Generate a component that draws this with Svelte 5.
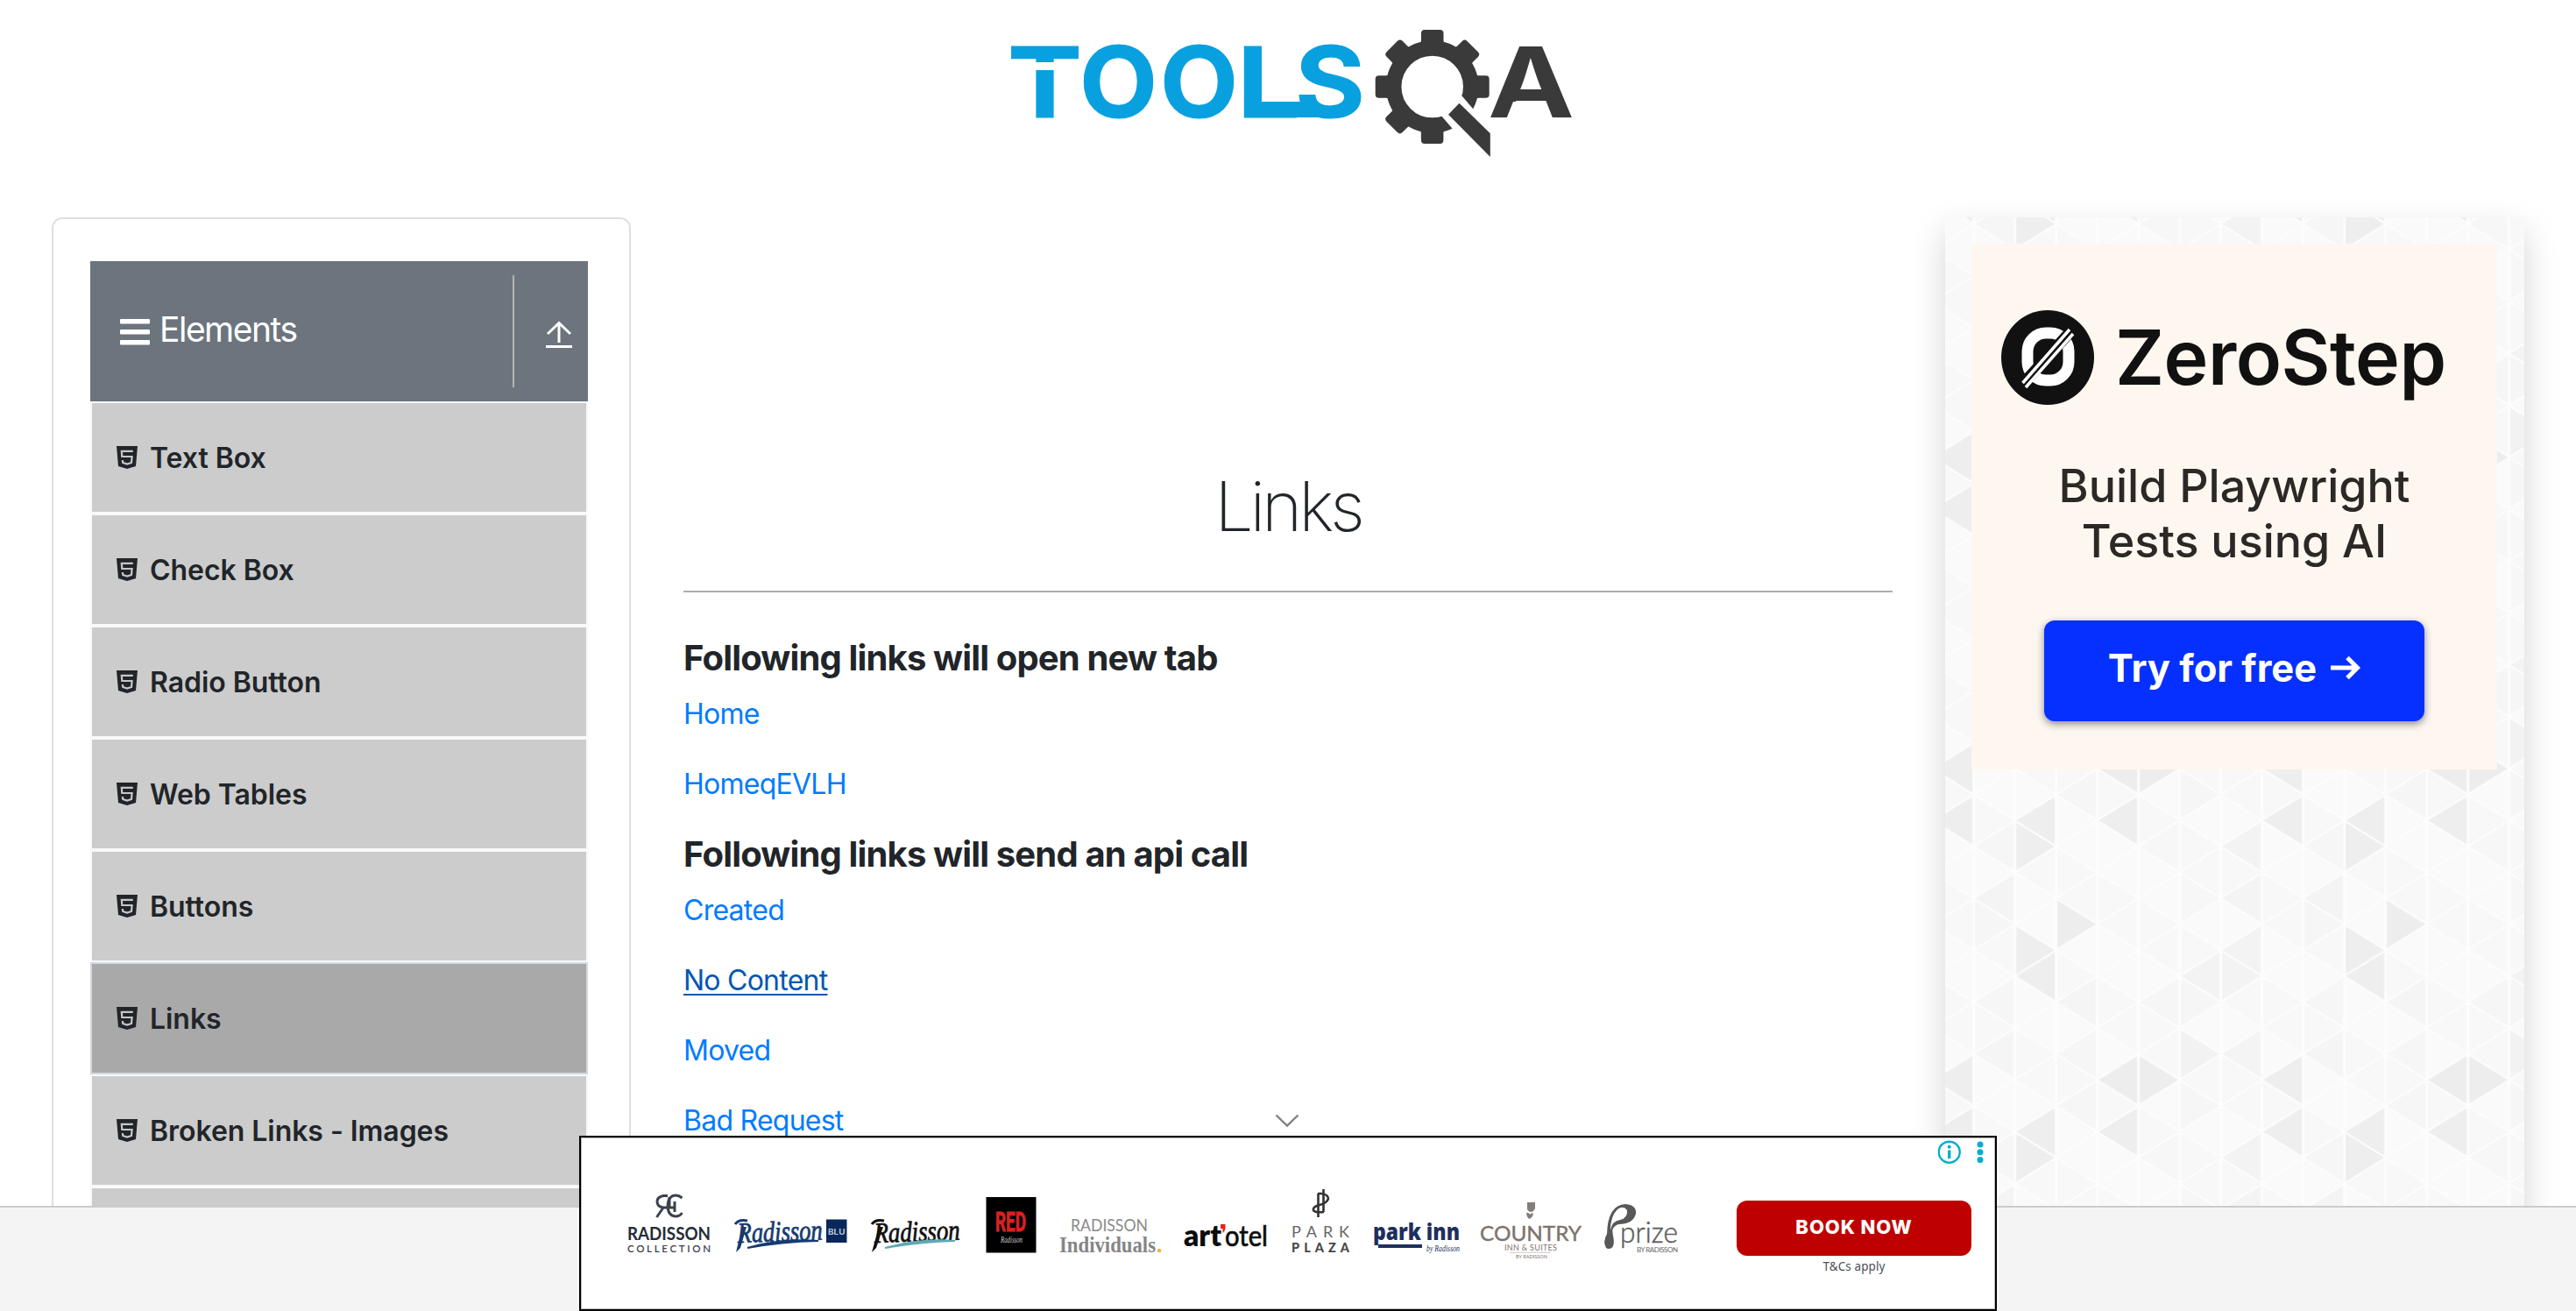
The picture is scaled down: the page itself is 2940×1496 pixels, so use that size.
<script>
  const menu = ['Text Box', 'Check Box', 'Radio Button', 'Web Tables', 'Buttons', 'Links', 'Broken Links - Images'];
  const active = 'Links';
  const tabLinks = ['Home', 'HomeqEVLH'];
  const apiLinks = ['Created', 'No Content', 'Moved', 'Bad Request'];
  const hovered = 'No Content';

  // Triangle backdrop: strips of width W, rows of half-height H, repeating every 8 x 12 cells.
  const W = 47;
  const H = 29.6;
  const shades = {
    '2,2': '#eeeeee', '4,2': '#eeeeee', '0,2': '#eeeeee', '2,3': '#eeeeee', '7,3': '#f3f3f3',
    '1,3': '#f6f6f6', '5,3': '#f7f7f7', '1,5': '#f4f4f4', '7,5': '#f4f4f4', '6,5': '#f7f7f7',
    '3,6': '#ededed', '1,6': '#f6f6f6', '2,7': '#eeeeee', '7,7': '#f3f3f3', '2,8': '#eeeeee',
    '6,8': '#f3f3f3', '7,8': '#f3f3f3', '3,9': '#f5f5f5', '5,9': '#f6f6f6', '6,9': '#f6f6f6',
    '1,9': '#f6f6f6', '6,11': '#f2f2f2', '7,11': '#f4f4f4', '1,11': '#f5f5f5', '3,11': '#f6f6f6',
    '4,0': '#ededed', '5,0': '#ededed', '0,0': '#eeeeee', '3,1': '#f6f6f6', '6,1': '#f6f6f6'
  };
  const triangles = [];
  for (let s = 0; s < 8; s++) {
    for (let k = -1; k <= 12; k++) {
      const row = (k + 12) % 12;
      const left = s * W + 1.5;
      const right = (s + 1) * W - 1.5;
      const y = k * H;
      const h = H - 2.5;
      const pts = (s + row) % 2 === 0
        ? `${left},${y} ${right},${y - h} ${right},${y + h}`
        : `${right},${y} ${left},${y - h} ${left},${y + h}`;
      const fill = shades[`${s},${row}`] ?? ((s * 5 + row * 3) % 4 < 2 ? '#fafafa' : '#f8f8f8');
      triangles.push({ pts, fill });
    }
  }
</script>

<div class="page">
  <header>
    <svg class="brand" viewBox="1140 20 670 170" width="670" height="170">
      <g class="word">
        <text x="1150" y="134" textLength="85" lengthAdjust="spacingAndGlyphs">T</text>
        <text x="1232" y="134" textLength="89" lengthAdjust="spacingAndGlyphs">O</text>
        <text x="1324" y="134" textLength="89" lengthAdjust="spacingAndGlyphs">O</text>
        <text x="1412" y="134" textLength="72" lengthAdjust="spacingAndGlyphs">L</text>
        <text x="1478" y="134" textLength="80" lengthAdjust="spacingAndGlyphs">S</text>
      </g>
      <rect x="1150" y="71" width="84" height="9" fill="#fff" />
      <rect x="1420" y="116" width="84" height="18" fill="#09a0df" />
      <circle cx="1634.700" cy="99" r="44" stroke-width="17.500" fill="none" stroke="#3a3a3a" />
      <g fill="#3a3a3a">
        {#each [0, 45, 90, 180, 225, 270, 315] as a}
          <path d="M1613 57 Q1622 53 1622 46 V38 Q1622 34 1626 34 H1643.500 Q1647.500 34 1647.500 38 V46 Q1647.500 53 1656.500 57Z" transform="rotate({a} 1634.7 99)" />
        {/each}
      </g>
      <path d="M1664 108 L1669 110 L1705 152 V190 H1695 L1644 131Z" fill="#fff" />
      <path d="M1665.500 117.700 L1700.800 152.300 V179 L1653 130.700Z" fill="#3a3a3a" />
      <text class="dark" x="1698" y="134" textLength="99" lengthAdjust="spacingAndGlyphs">A</text>
      <path d="M1719 136 L1727 116 H1732 L1730 136Z" fill="#fff" />
    </svg>
  </header>

  <main>
    <aside class="sidebar">
      <div class="group">
        <div class="title">
          <svg width="34" height="32" viewBox="0 0 34 32" fill="#fff">
            <rect y="1" width="34" height="5.500" rx="1" /><rect y="13" width="34" height="5.500" rx="1" /><rect y="25" width="34" height="5.500" rx="1" />
          </svg>
          <span>Elements</span>
        </div>
        <div class="toggle">
          <svg width="32" height="32" viewBox="0 0 32 32" fill="none" stroke="#fff" stroke-width="3">
            <path d="M3 15 L16 2.500 L29 15 M16 3 V25 M1 29.500 H31" />
          </svg>
        </div>
      </div>
      <ul>
        {#each menu as item}
          <li class:active={item === active}>
            <svg width="24" height="26" viewBox="0 0 24 26">
              <path d="M0 0 H24 L22 23 L12 26 L2 23Z" fill="#212529" />
              <path d="M18.800 5.800 H5.800 L6.300 12 H17.600 L17 19 L12 20.600 L7.200 19 L6.900 16" fill="none" stroke="#c6c6c6" stroke-width="2.200" />
            </svg>
            <span>{item}</span>
          </li>
        {/each}
        <li></li>
      </ul>
    </aside>

    <section class="content">
      <h1>Links</h1>
      <h5>Following links will open new tab</h5>
      {#each tabLinks as link}<p><a href="#top">{link}</a></p>{/each}
      <h5>Following links will send an api call</h5>
      {#each apiLinks as link}<p><a href="#top" class:hovered={link === hovered}>{link}</a></p>{/each}
    </section>

    <aside class="promo">
      <svg class="backdrop" width="661" height="1128">
        <defs>
          <pattern id="tri" x="-14.400" y="273.900" width={W * 8} height={H * 12} patternUnits="userSpaceOnUse">
            <rect width={W * 8} height={H * 12} fill="#fdfdfd" />
            {#each triangles as t}
              <polygon points={t.pts} fill={t.fill} />
            {/each}
          </pattern>
        </defs>
        <rect width="661" height="1128" fill="url(#tri)" />
      </svg>
      <div class="card">
        <div class="zs">
          <svg width="106" height="108" viewBox="0 0 106 108">
            <ellipse cx="53" cy="54" rx="53" ry="54" fill="#111" />
            <rect x="30" y="26" width="47" height="54" rx="21" fill="none" stroke="#fff" stroke-width="13" />
            <path d="M23 86 L83 20" stroke="#111" stroke-width="13" />
            <path d="M24.500 83 L78 22 M28 88 L82 27" stroke="#fff" stroke-width="3.500" />
          </svg>
          <span>ZeroStep</span>
        </div>
        <div class="pitch"><span>Build Playwright</span><span>Tests using AI</span></div>
        <div class="try">
          <span>Try for free</span>
          <svg width="34" height="28" viewBox="0 0 34 28" fill="none" stroke="#fff" stroke-width="5"><path d="M0 14 H30 M19 2.500 L30.500 14 L19 25.500" /></svg>
        </div>
      </div>
    </aside>
  </main>

  <footer></footer>

  <svg class="chevron" width="28" height="16" viewBox="0 0 28 16" fill="none" stroke="#808080" stroke-width="2.400"><path d="M1.500 1.500 L14 13.500 L26.500 1.500" /></svg>

  <div class="banner">
    <svg class="brands" viewBox="663 1298 1290 196" width="1290" height="196">
      <g fill="none" stroke="#3b424b" stroke-width="3">
        <path d="M762 1364.500 H757 Q750 1366 750 1371 Q750 1377 757 1378 H770 M757 1378 L749.500 1389 M764 1366 V1377" />
        <path d="M778.500 1367 Q773 1362.500 767 1365 Q762 1368 762 1377 Q763 1388 771 1388 Q776 1388 778.500 1384" />
        <path d="M770 1371 V1383" />
      </g>
      <text x="716" y="1415" textLength="95" lengthAdjust="spacingAndGlyphs" font-size="21" font-weight="700" font-family="Lato" fill="#252c36">RADISSON</text>
      <text x="716" y="1429" textLength="95" font-size="11.500" font-weight="600" font-family="Lato" fill="#3d434c">COLLECTION</text>

      <g fill="#173a70">
        <text class="script" transform="translate(842 1418) rotate(-2)" textLength="97" lengthAdjust="spacingAndGlyphs" font-size="33" stroke="#173a70">Radisson</text>
        <path d="M839 1397 Q843 1391 853 1393" fill="none" stroke="#173a70" stroke-width="3" />
        <path d="M853 1424 Q890 1413 934 1416 Q892 1417 853 1424Z" stroke="#173a70" stroke-width="2" />
        <path d="M847 1400 L840 1429 L845 1424 L852 1400Z" />
      </g>
      <rect x="943" y="1391.500" width="23.500" height="26.500" fill="#0a2759" />
      <text x="945" y="1408.500" textLength="19.500" lengthAdjust="spacingAndGlyphs" font-size="9" font-weight="700" font-family="Inter" fill="#b8c4d8">BLU</text>

      <g fill="#111">
        <text class="script" transform="translate(998 1418) rotate(-2)" textLength="98" lengthAdjust="spacingAndGlyphs" font-size="33" stroke="#111">Radisson</text>
        <path d="M995 1397 Q999 1391 1009 1393" fill="none" stroke="#111" stroke-width="3" />
        <path d="M1003 1400 L995 1429 L1000 1424 L1008 1400Z" />
      </g>
      <path d="M1010 1424 Q1050 1413 1090 1416 Q1050 1417 1010 1424Z" fill="#5fa9b5" stroke="#5fa9b5" stroke-width="2" />

      <rect x="1125.500" y="1366" width="57" height="63.500" fill="#000" />
      <text x="1136" y="1405" textLength="35" lengthAdjust="spacingAndGlyphs" font-size="31" font-weight="700" font-family="Roboto" fill="#d62322" stroke="#d62322" stroke-width="1">RED</text>
      <text class="script" x="1142" y="1418" textLength="25" lengthAdjust="spacingAndGlyphs" font-size="10" fill="#ccc">Radisson</text>

      <text x="1222" y="1405" textLength="88" lengthAdjust="spacingAndGlyphs" font-size="18.500" font-family="Lato" fill="#8a8a8a">RADISSON</text>
      <text x="1209" y="1429" textLength="110" lengthAdjust="spacingAndGlyphs" font-size="25" font-weight="700" font-family="Liberation Serif" fill="#858585">Individuals</text>
      <circle cx="1323" cy="1427" r="2.300" fill="#f2b04a" />

      <text x="1351" y="1422" textLength="43" lengthAdjust="spacingAndGlyphs" font-size="33" font-weight="800" font-family="Lato" fill="#0c0c0c">art</text>
      <path d="M1393 1397 h5.500 v5 q-1 4 -3 5 v-5 h-2.500z" fill="#e1251b" />
      <text x="1398" y="1422" textLength="49" lengthAdjust="spacingAndGlyphs" font-size="33" font-family="Lato" stroke="#0c0c0c" stroke-width=".7" fill="#0c0c0c">otel</text>

      <g fill="none" stroke="#333" stroke-width="2.600">
        <path d="M1504.500 1362 V1389 M1510.500 1357 V1383" />
        <path d="M1504 1362 H1508 Q1516 1363 1516 1368 Q1514 1373 1506 1375 Q1498 1377 1499 1381 Q1500 1384 1511 1383" />
      </g>
      <text x="1474" y="1411.700" textLength="66" font-size="18" font-family="Lato" fill="#666">PARK</text>
      <text x="1474" y="1429" textLength="66" font-size="14.500" font-weight="900" font-family="Lato" fill="#484848">PLAZA</text>

      <text x="1567" y="1415" textLength="99" lengthAdjust="spacingAndGlyphs" font-size="26" font-weight="800" font-family="Open Sans" fill="#1e2f5c">park inn</text>
      <rect x="1573" y="1420" width="50" height="4" fill="#1e2f5c" />
      <text class="script" x="1628" y="1428" textLength="38" lengthAdjust="spacingAndGlyphs" font-size="9.500" fill="#1e2f5c">by Radisson</text>

      <path d="M1743 1372 h9 v7 q-2 4 -5 4 q-4 -1 -4 -4z M1742 1384 q3 -1 4 2 q2 -3 4 -1 q-1 5 -5 6 q-3 -3 -3 -7z" fill="#857d78" />
      <text x="1689" y="1415.500" textLength="116" lengthAdjust="spacingAndGlyphs" font-size="24" font-family="Lato" fill="#7d736c" stroke="#7d736c" stroke-width=".4">COUNTRY</text>
      <text x="1717" y="1427" textLength="60" font-size="9" font-family="Lato" fill="#7d736c">INN &amp; SUITES</text>
      <path d="M1723 1429.200 H1770" stroke="#c9c5c2" stroke-width="1" />
      <text x="1730" y="1436" textLength="36" font-size="5.500" font-family="Lato" fill="#7d736c">BY RADISSON</text>

      <path fill-rule="evenodd" d="M1833 1424 Q1829 1417 1834 1408 Q1835 1375 1855 1374 Q1868 1375 1867 1385 Q1864 1397 1847 1397 Q1838 1400 1841 1410 Q1844 1425 1836 1425 Q1834 1425 1833 1424Z M1838 1404 Q1840 1393 1849 1392 Q1858 1390 1857 1381 Q1853 1375 1846 1380 Q1838 1388 1838 1404Z" fill="#585858" />
      <text x="1849" y="1418" textLength="66" lengthAdjust="spacingAndGlyphs" font-size="34" font-weight="300" font-family="Lato" fill="#5c5c5c" stroke="#5c5c5c" stroke-width=".5">prize</text>
      <text x="1868" y="1429" textLength="47" font-size="8" font-family="Lato" fill="#666">BY RADISSON</text>
    </svg>
    <div class="cta">
      <div class="book">BOOK NOW</div>
      <small>T&amp;Cs apply</small>
    </div>
    <svg class="info" width="52" height="28" viewBox="2212 1300 52 28">
      <circle cx="2224.700" cy="1314.700" r="12" fill="none" stroke="#00aecd" stroke-width="2.400" />
      <circle cx="2224.700" cy="1308.800" r="2" fill="#00aecd" /><rect x="2223" y="1312.500" width="3.400" height="9.500" fill="#00aecd" />
      <g fill="#00aecd"><circle cx="2260" cy="1306" r="3.500" /><circle cx="2260" cy="1314.700" r="3.500" /><circle cx="2260" cy="1323.500" r="3.500" /></g>
    </svg>
  </div>
</div>

<style>
  :global(body) { margin: 0; background: #fff; }
  .page {
    position: relative; width: 2940px; height: 1496px; overflow: hidden;
    display: flex; flex-direction: column; box-sizing: border-box;
    font-family: Inter, "Liberation Sans", sans-serif; color: #212529; background: #fff;
  }
  header { height: 188px; flex: none; box-sizing: border-box; padding: 20px 0 0 10px; display: flex; justify-content: center; }
  .brand { display: block; overflow: visible; flex: none; }
  .word text { font: 700 112px Inter, sans-serif; fill: #09a0df; stroke: #09a0df; }
  .dark { font: 700 112px Inter, sans-serif; fill: #3a3a3a; }
  main {
    height: 1188px; flex: none; box-sizing: border-box; overflow: hidden;
    padding: 60px 59px 0 59px; display: flex; align-items: flex-start;
  }
  footer { height: 120px; box-sizing: border-box; border-top: 2px solid #ccc; background: #f4f4f4; }

  .sidebar {
    width: 661px; height: 1300px; flex: none; box-sizing: border-box;
    border: 2px solid #dfdfdf; border-radius: 12px; padding: 48px 47px 0 42px;
  }
  .group { height: 160px; background: #6c757d; color: #fff; display: flex; align-items: center; }
  .title { flex: 1; height: 128px; padding-left: 34px; display: flex; align-items: center; gap: 11px; font-size: 39px; letter-spacing: -1.500px; border-right: 2px solid #b3b5ae; }
  .title svg { margin-top: 2px; }
  .title span { line-height: 48px; margin-top: -5px; }
  .toggle { width: 84px; display: flex; justify-content: center; padding: 8px 0 0 17px; box-sizing: border-box; }
  ul { list-style: none; margin: 0; padding: 0; }
  li {
    height: 128px; box-sizing: border-box; border: 2px solid #f8f9fa; background: #ccc;
    display: flex; align-items: center; gap: 14px; padding-left: 28px;
    font-size: 32px; font-weight: 600; letter-spacing: -.050px;
  }
  li.active { background: #a9a9a9; border-color: #d3d9df; }

  .content { width: 1380px; flex: none; margin-left: 60px; padding-top: 281px; }
  h1 { margin: 0 0 51px; padding-bottom: 49px; border-bottom: 2px solid #adadad; text-align: center; font-size: 79px; line-height: 96px; font-weight: 200; letter-spacing: -4.200px; }
  h5 { margin: 0 0 16px; font-size: 40px; line-height: 48px; font-weight: 700; letter-spacing: -.850px; }
  p { margin: 0 0 32px; font-size: 32px; line-height: 48px; letter-spacing: -.750px; }
  a { color: #007bff; text-decoration: none; }
  a.hovered { color: #0056b3; text-decoration: underline; text-decoration-thickness: 2px; text-underline-offset: 4px; }

  .promo { position: relative; width: 661px; height: 1300px; flex: none; margin-left: 60px; padding: 30px; box-sizing: border-box; box-shadow: 0 16px 36px rgba(0, 0, 0, .17); }
  .backdrop { position: absolute; left: 0; top: 0; }
  .card { position: relative; width: 600px; height: 600px; background: #fdf7f0; display: flex; flex-direction: column; align-items: center; }
  .zs { align-self: flex-start; display: flex; align-items: center; gap: 24px; margin: 76px 0 0 34px; height: 108px; font-size: 86px; font-weight: 600; letter-spacing: -.500px; color: #111; }
  .pitch { margin-top: 61px; display: flex; flex-direction: column; align-items: center; font-size: 52px; line-height: 63px; font-weight: 500; color: #2b2826; }
  .try {
    width: 434px; height: 115px; margin-top: 59px; background: #0630ff; border-radius: 12px; box-shadow: 0 3px 8px rgba(20, 20, 60, .5);
    display: flex; align-items: center; justify-content: center; gap: 16px; padding-bottom: 8px; box-sizing: border-box; color: #fff; font-size: 43.500px; font-weight: 700;
  }

  .chevron { position: absolute; left: 1455px; top: 1271px; }
  .banner {
    position: absolute; left: 661px; top: 1296px; width: 1618px; height: 200px; box-sizing: border-box;
    border: 2px solid #000; background: #fff; display: flex; box-shadow: inset 0 0 0 1px #bbb;
  }
  .brands { flex: none; overflow: visible; }
  .script { font-family: "Liberation Serif", serif; font-style: italic; font-weight: 400; stroke-width: .8; }
  .cta { margin: 72px 0 0 29px; width: 268px; display: flex; flex-direction: column; align-items: center; }
  .book { width: 268px; height: 63px; border-radius: 12px; background: #bf0000; color: #fff; font: 800 22px/60px Inter, sans-serif; letter-spacing: .900px; text-align: center; }
  small { font: 13.500px/20px "Noto Sans", sans-serif; color: #4b4f55; margin-top: 2px; letter-spacing: .1px; }
  .info { position: absolute; right: 13px; top: 2px; }
</style>
